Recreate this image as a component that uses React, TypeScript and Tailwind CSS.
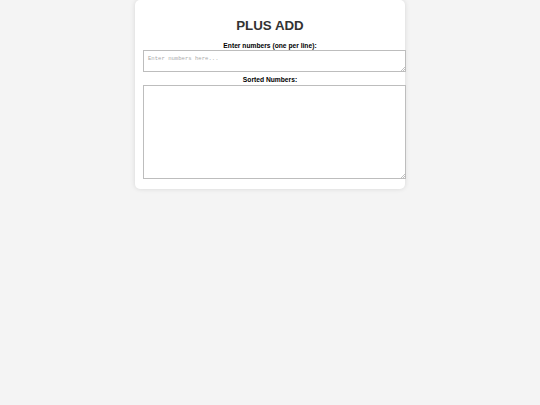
import { useState } from "react";

function Grip() {
  return (
    <svg className="pointer-events-none absolute right-[1px] bottom-[1px]" width="5" height="5" viewBox="0 0 5 5">
      <path d="M5 1 L1 5 M5 3 L3 5" stroke="#a8a8a8" strokeWidth="0.7" />
    </svg>
  );
}

export default function App() {
  const [input, setInput] = useState("");

  const sorted = input
    .split("\n")
    .map((s) => s.trim())
    .filter((s) => s !== "" && !isNaN(Number(s)))
    .map(Number)
    .sort((a, b) => a - b)
    .join("\n");

  return (
    <div className="min-h-[405px] bg-[#f4f4f4] font-['Liberation_Sans',Arial,sans-serif]">
      <div className="ml-[135px] w-[270px] rounded-[5px] bg-white px-[8px] pt-[18px] pb-[10px] shadow-[0_0_5px_rgba(0,0,0,0.12)]">
        <h1 className="text-center text-[13.3px] leading-[16px] font-bold text-[#333]">PLUS ADD</h1>

        <label className="mt-[8px] block text-center text-[6.7px] leading-[8px] font-bold text-black">
          Enter numbers (one per line):
        </label>
        <div className="relative w-[263px]">
          <textarea
            value={input}
            onChange={(e) => setInput(e.target.value)}
            placeholder="Enter numbers here..."
            className="block h-[22px] w-full resize-none border-[0.67px] border-[#bdbdbd] bg-white px-[4px] py-[4px] font-['Liberation_Mono',Courier,monospace] text-[5.6px] leading-[7px] outline-none placeholder:text-[#aaa]"
          />
          <Grip />
        </div>

        <label className="mt-[4px] block text-center text-[6.7px] leading-[8px] font-bold text-black">
          Sorted Numbers:
        </label>
        <div className="relative mt-[1px] w-[263px]">
          <textarea
            readOnly
            value={sorted}
            className="block h-[94px] w-full resize-none border-[0.67px] border-[#bdbdbd] bg-white p-[4px] font-['Liberation_Mono',Courier,monospace] text-[5.6px] leading-[7px] outline-none"
          />
          <Grip />
        </div>
      </div>
    </div>
  );
}
